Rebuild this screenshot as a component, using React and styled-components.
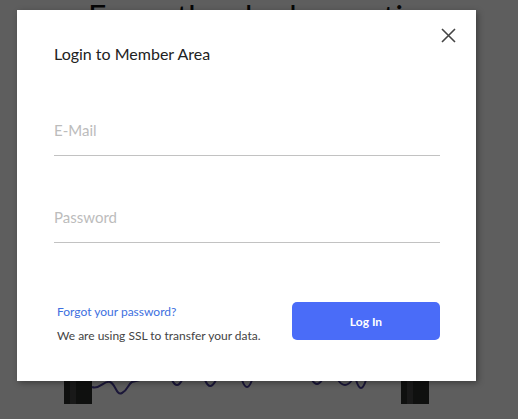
import React from 'react';
import styled, { createGlobalStyle } from 'styled-components';

const GlobalStyle = createGlobalStyle`
  html, body {
    margin: 0;
    padding: 0;
    height: 100%;
    overflow: hidden;
  }
  body {
    font-family: Lato, 'Open Sans', sans-serif;
    background: #ffffff;
  }
`;

const Page = styled.div`
  position: relative;
  width: 518px;
  height: 419px;
  overflow: hidden;
  background: #ffffff;
`;

const PageHeading = styled.h1`
  margin: 0;
  padding: 1px 0 0 88px;
  font-family: Lato, sans-serif;
  font-weight: 400;
  font-size: 32px;
  line-height: 1;
  color: #111;
  white-space: nowrap;
`;

const Illustration = styled.svg`
  position: absolute;
  left: 0;
  top: 360px;
`;

const Overlay = styled.div`
  position: absolute;
  inset: 0;
  background: rgba(0, 0, 0, 0.63);
  display: flex;
  align-items: flex-start;
  justify-content: flex-start;
  padding: 10px 0 0 17px;
`;

const Modal = styled.div`
  position: relative;
  width: 459px;
  height: 371px;
  box-sizing: border-box;
  background: #ffffff;
  padding: 34px 36px 0 37px;
  box-shadow: 2px 2px 6px rgba(0, 0, 0, 0.35);
  display: flex;
  flex-direction: column;
`;

const CloseButton = styled.button`
  position: absolute;
  top: 17px;
  right: 19px;
  width: 17px;
  height: 17px;
  padding: 0;
  border: none;
  background: none;
  cursor: pointer;
  display: flex;
`;

const Title = styled.h2`
  margin: 0;
  font-family: Lato, sans-serif;
  font-weight: 400;
  font-size: 16px;
  line-height: 19px;
  color: #222;
`;

const Fields = styled.div`
  display: flex;
  flex-direction: column;
  gap: 41px;
  margin-top: 47px;
`;

const Field = styled.input`
  display: block;
  width: 100%;
  box-sizing: border-box;
  border: none;
  border-bottom: 1px solid #c2c2c2;
  outline: none;
  padding: 10px 0 15px;
  margin: 0;
  font-family: Lato, sans-serif;
  font-size: 15px;
  line-height: 20px;
  height: 46px;
  color: #333;
  background: transparent;

  &::placeholder {
    color: #bcbcbc;
  }
`;

const Footer = styled.div`
  display: flex;
  justify-content: space-between;
  align-items: flex-start;
  margin-top: 59px;
`;

const Notes = styled.div`
  display: flex;
  flex-direction: column;
  gap: 9px;
  padding: 2px 0 0 3px;
`;

const ForgotLink = styled.a`
  font-size: 12px;
  line-height: 15px;
  color: #3d6fe0;
  text-decoration: none;
  cursor: pointer;
`;

const Note = styled.p`
  margin: 0;
  font-size: 12px;
  line-height: 15px;
  color: #444;
`;

const LoginButton = styled.button`
  width: 148px;
  height: 38px;
  border: none;
  border-radius: 5px;
  background: #4a6cf8;
  color: #ffffff;
  font-family: Lato, sans-serif;
  font-weight: 700;
  font-size: 12px;
  cursor: pointer;
`;

const App = () => (
  <>
    <GlobalStyle />
    <Page>
      <PageHeading>Fancy the shadow options</PageHeading>
      <Illustration width="518" height="50" viewBox="0 0 518 50">
        <rect x="64" y="0" width="28" height="44" fill="#2b2c2b" />
        <rect x="70" y="0" width="6" height="44" fill="#444" />
        <rect x="401" y="0" width="28" height="44" fill="#2b2c2b" />
        <rect x="407" y="0" width="6" height="44" fill="#444" />
        <path
          d="M92 27 C 100 30, 104 20, 110 22 S 116 36, 122 33 S 128 24, 132 22 L 140 20 M 172 20 Q 177 30 182 20 M 205 20 Q 210 32 216 20 M 242 20 Q 247 34 252 20 M 312 20 Q 317 28 322 20 M 338 20 Q 345 30 352 20 M 356 20 Q 361 36 366 20"
          fill="none"
          stroke="#4a3f9a"
          strokeWidth="2"
        />
      </Illustration>
      <Overlay>
        <Modal>
          <CloseButton aria-label="Close">
            <svg width="17" height="17" viewBox="0 0 17 17">
              <path d="M2 2 L15 15 M15 2 L2 15" stroke="#444" strokeWidth="1.6" />
            </svg>
          </CloseButton>
          <Title>Login to Member Area</Title>
          <Fields>
            <Field type="email" placeholder="E-Mail" />
            <Field type="password" placeholder="Password" />
          </Fields>
          <Footer>
            <Notes>
              <ForgotLink>Forgot your password?</ForgotLink>
              <Note>We are using SSL to transfer your data.</Note>
            </Notes>
            <LoginButton>Log In</LoginButton>
          </Footer>
        </Modal>
      </Overlay>
    </Page>
  </>
);

export default App;
